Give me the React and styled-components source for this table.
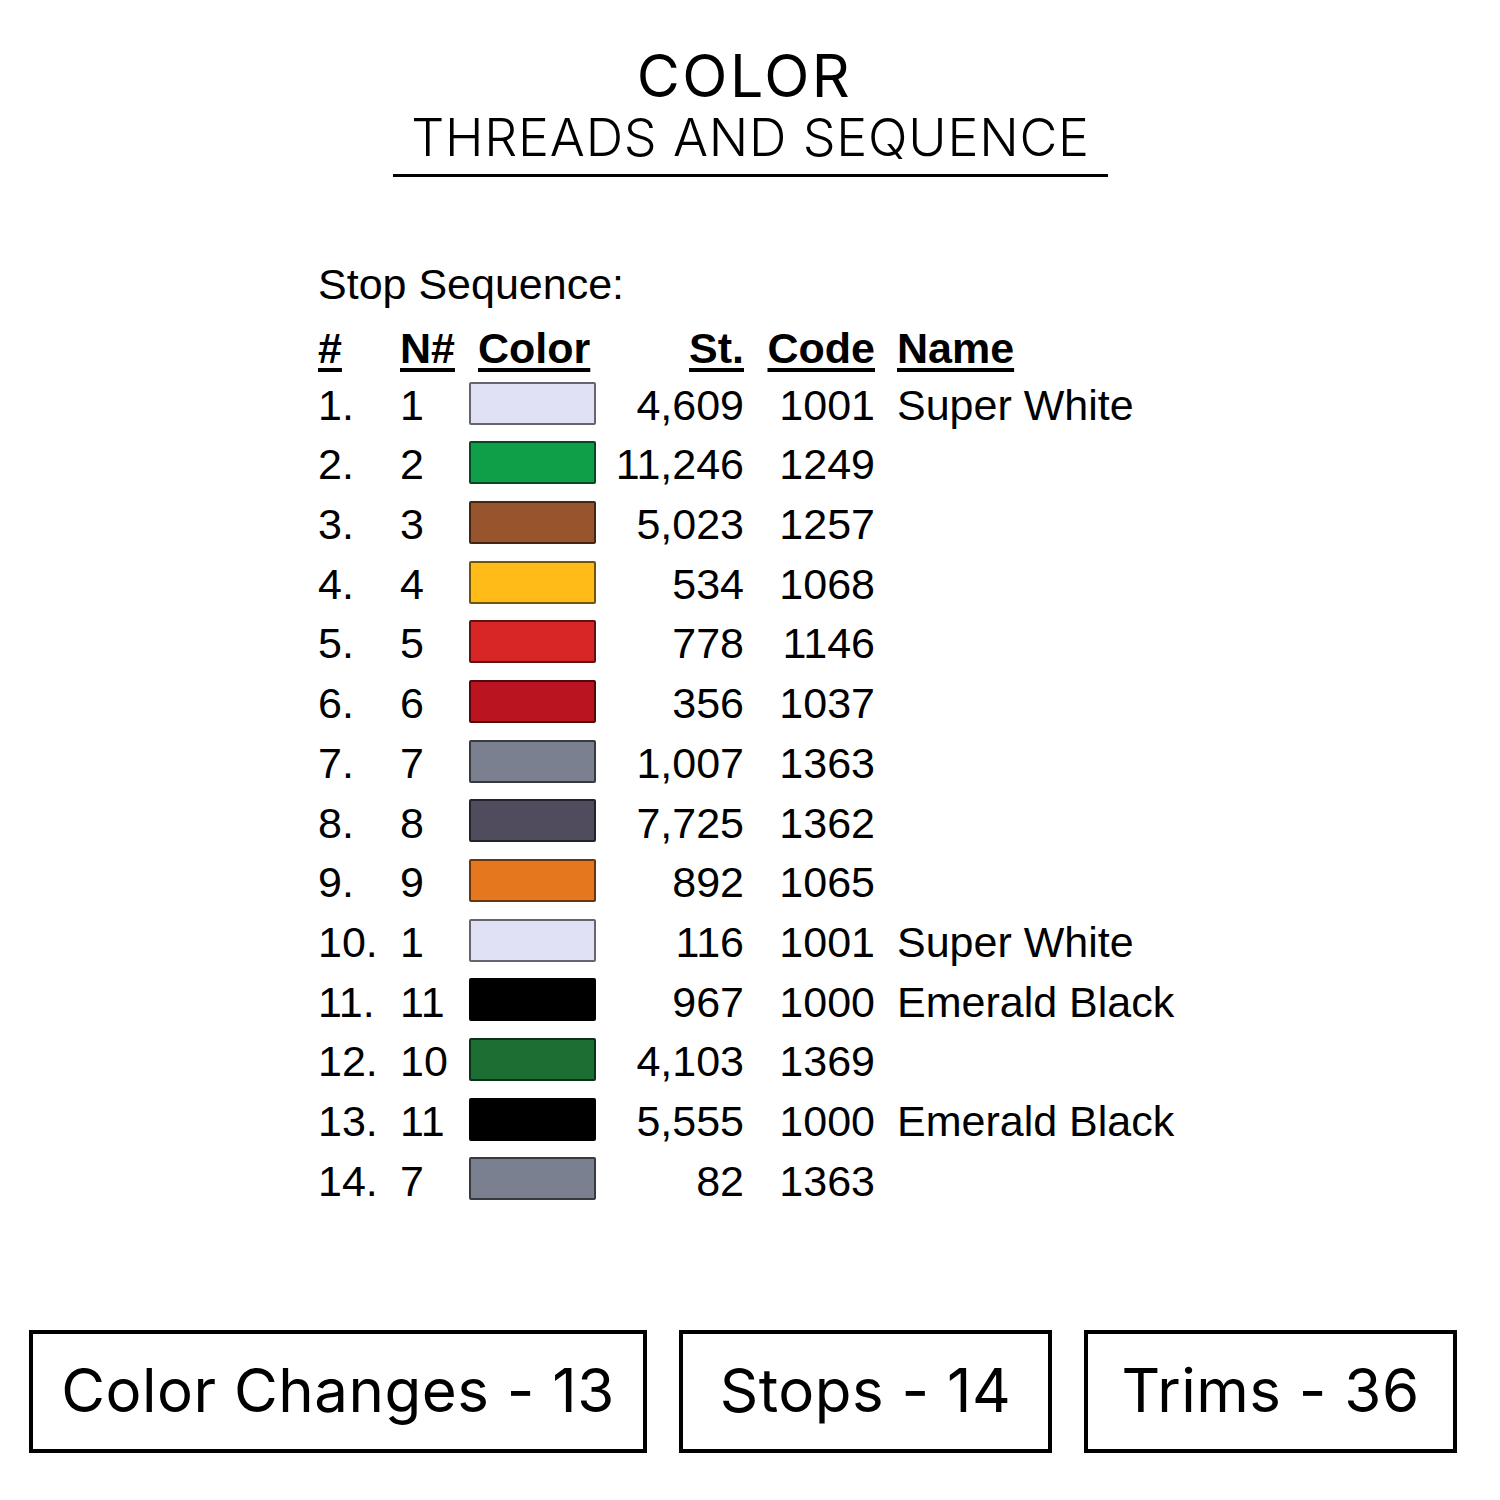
import React from "react";
import styled, { createGlobalStyle } from "styled-components";

const Global = createGlobalStyle`
  html, body { margin: 0; padding: 0; background: #fff; }
  body { width: 1500px; height: 1500px; overflow: hidden; }
`;

const Page = styled.div`
  width: 1500px;
  height: 1500px;
  display: flex;
  flex-direction: column;
  align-items: center;
  color: #000;
  box-sizing: border-box;
`;

const Header = styled.header`
  display: flex;
  flex-direction: column;
  align-items: center;
  padding-top: 40px;
  margin-left: 1px;
`;

const Title = styled.h1`
  margin: 0;
  font-family: Inter, "DejaVu Sans", sans-serif;
  font-weight: 400;
  font-size: 59px;
  line-height: 72px;
  letter-spacing: 2.5px;
  margin-left: -12px;
`;

const Subtitle = styled.h2`
  margin: 0;
  font-family: Inter, "DejaVu Sans", sans-serif;
  font-weight: 300;
  font-size: 52px;
  line-height: 52px;
  letter-spacing: 0.8px;
  width: 715px;
  text-align: center;
  padding-bottom: 10px;
  border-bottom: 3px solid #000;
`;

const Section = styled.section`
  width: 1500px;
  padding-left: 318px;
  padding-top: 78px;
  box-sizing: border-box;
  font-family: "Liberation Sans", Arial, sans-serif;
  font-size: 43px;
`;

const Caption = styled.div`
  line-height: 59.7px;
  margin-bottom: 4px;
`;

const Table = styled.div`
  display: grid;
  grid-template-columns: 82px 69px 127px 148px 131px auto;
  grid-template-rows: 57px;
  grid-auto-rows: 59.7px;
  line-height: 59.7px;
  white-space: nowrap;
`;

const Cell = styled.div`
  text-align: ${(p) => (p.$right ? "right" : "left")};
  padding-left: ${(p) => p.$pl || 0}px;
  font-weight: ${(p) => (p.$head ? 700 : 400)};
  text-decoration: ${(p) => (p.$head ? "underline" : "none")};
  text-decoration-thickness: 4px;
  text-underline-offset: 5px;
`;

const SwatchCell = styled.div`
  display: flex;
  align-items: center;
  padding-bottom: 5px;
  box-sizing: border-box;
`;

const Swatch = styled.div`
  width: 127px;
  height: 43px;
  box-sizing: border-box;
  border: 2px solid rgba(0, 0, 0, 0.55);
  border-radius: 2px;
  background: ${(p) => p.$color};
`;

const Footer = styled.footer`
  margin-top: auto;
  margin-bottom: 47px;
  display: flex;
  gap: 32px;
  padding-left: 29px;
  width: 1500px;
  box-sizing: border-box;
`;

const StatBox = styled.div`
  width: ${(p) => p.$w}px;
  height: 123px;
  box-sizing: border-box;
  border: 4px solid #000;
  display: flex;
  align-items: center;
  justify-content: center;
  font-family: Inter, "DejaVu Sans", sans-serif;
  font-size: 60px;
  font-weight: 400;
  letter-spacing: 0.5px;
  padding-bottom: 4px;
`;

const rows = [
  ["1.", "1", "#e1e1f6", "4,609", "1001", "Super White"],
  ["2.", "2", "#0f9f48", "11,246", "1249", ""],
  ["3.", "3", "#98552d", "5,023", "1257", ""],
  ["4.", "4", "#ffbb18", "534", "1068", ""],
  ["5.", "5", "#d82627", "778", "1146", ""],
  ["6.", "6", "#ba1420", "356", "1037", ""],
  ["7.", "7", "#7a808f", "1,007", "1363", ""],
  ["8.", "8", "#514c5d", "7,725", "1362", ""],
  ["9.", "9", "#e5781f", "892", "1065", ""],
  ["10.", "1", "#e1e1f6", "116", "1001", "Super White"],
  ["11.", "11", "#000000", "967", "1000", "Emerald Black"],
  ["12.", "10", "#1d6e32", "4,103", "1369", ""],
  ["13.", "11", "#000000", "5,555", "1000", "Emerald Black"],
  ["14.", "7", "#7a808f", "82", "1363", ""],
];

export default function App() {
  return (
    <Page>
      <Global />
      <Header>
        <Title>COLOR</Title>
        <Subtitle>THREADS AND SEQUENCE</Subtitle>
      </Header>
      <Section>
        <Caption>Stop Sequence:</Caption>
        <Table>
          <Cell $head>#</Cell>
          <Cell $head>N#</Cell>
          <Cell $head $pl={9}>Color</Cell>
          <Cell $head $right>St.</Cell>
          <Cell $head $right>Code</Cell>
          <Cell $head $pl={22}>Name</Cell>
          {rows.map((r) => (
            <React.Fragment key={r[0]}>
              <Cell>{r[0]}</Cell>
              <Cell>{r[1]}</Cell>
              <SwatchCell>
                <Swatch $color={r[2]} />
              </SwatchCell>
              <Cell $right>{r[3]}</Cell>
              <Cell $right>{r[4]}</Cell>
              <Cell $pl={22}>{r[5]}</Cell>
            </React.Fragment>
          ))}
        </Table>
      </Section>
      <Footer>
        <StatBox $w={618}>Color Changes - 13</StatBox>
        <StatBox $w={373}>Stops - 14</StatBox>
        <StatBox $w={373}>Trims - 36</StatBox>
      </Footer>
    </Page>
  );
}
